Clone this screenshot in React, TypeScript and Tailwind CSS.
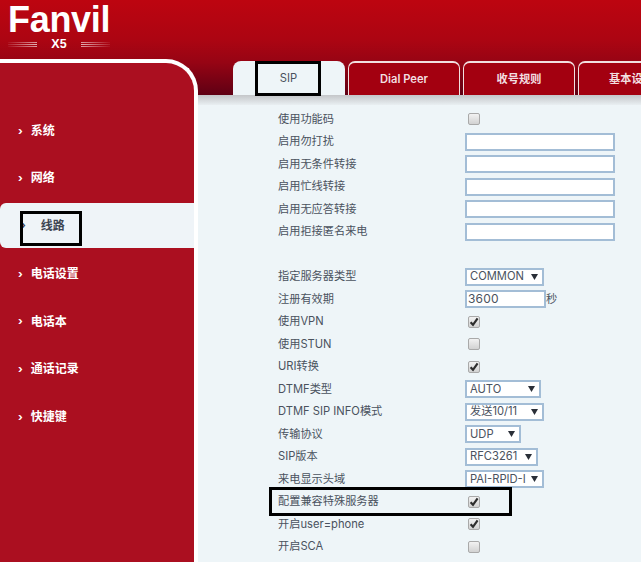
import React from "react";

const cjk = { fontFamily: 'Inter, "Noto Sans CJK SC", sans-serif' };

function Check({ on }: { on?: boolean }) {
  return (
    <span className="ml-[3px] flex h-[12px] w-[12px] items-center justify-center rounded-[2px] border border-[#a9a9a9] bg-gradient-to-b from-[#f2f2f2] to-[#d2d2d2]">
      {on && (
        <svg width="10" height="10" viewBox="0 0 10 10">
          <path d="M1.6 5.2 L4 7.8 L8.6 1.4" fill="none" stroke="#2e2e2e" strokeWidth="2.2" />
        </svg>
      )}
    </span>
  );
}

function TextBox({ w = "w-[150px]", value = "" }: { w?: string; value?: string }) {
  return (
    <div className={`${w} flex h-[18px] items-center border-2 border-[#a3bdd6] bg-white px-[1px] text-[12px] tracking-[0.2px] text-[#4a525e]`}>
      {value}
    </div>
  );
}

function Sel({ w, value }: { w: string; value: string }) {
  return (
    <div className={`${w} flex h-[18px] items-center justify-between overflow-hidden border-2 border-[#a3bdd6] bg-white pl-[3px] pr-[4px] text-[11.2px] text-[#4a525e]`}>
      <span className="overflow-hidden whitespace-nowrap">{value}</span>
      <svg width="7" height="6" viewBox="0 0 7 6" className="ml-[3px] shrink-0">
        <path d="M0 0 H7 L3.5 6 Z" fill="#2a2f38" />
      </svg>
    </div>
  );
}

function Row({ label, children }: { label?: string; children?: React.ReactNode }) {
  return (
    <div className="flex h-[22.5px] items-center">
      <div className="w-[187px] whitespace-nowrap text-[11.2px] text-[#4a525e]">{label}</div>
      {children}
    </div>
  );
}

const nav = ["系统", "网络", "线路", "电话设置", "电话本", "通话记录", "快捷键"];

function Tab({ label, w }: { label: string; w: string }) {
  return (
    <div className={`${w} flex h-full shrink-0 items-center justify-center rounded-t-[7px] border-x border-t-2 border-[#f2dfe0] bg-[#a30010] text-[11.2px] font-semibold text-[#f3dfe0]`}>
      {label}
    </div>
  );
}

function Lines({ flip }: { flip?: boolean }) {
  const dir = flip ? "bg-gradient-to-r" : "bg-gradient-to-l";
  return (
    <div className="flex w-[29px] flex-col gap-[1px]">
      <span className={`h-[1px] ${dir} from-white/60 to-white/5`} />
      <span className={`h-[1px] ${dir} from-white/70 to-white/10`} />
      <span className={`h-[1px] ${dir} from-white/60 to-white/5`} />
    </div>
  );
}

export default function App() {
  return (
    <div className="relative h-[562px] w-[641px] overflow-hidden bg-[#eef5f8]" style={cjk}>
      <header className="relative h-[95px] bg-[linear-gradient(180deg,#bd0510_0%,#ac0512_42%,#960414_66%,#5f0014_100%)]">
        <div className="flex h-[61px] flex-col pl-[8px] pt-[2px]">
          <div
            className="h-[35px] text-[36px] font-bold leading-[36px] tracking-[-0.3px] text-white"
            style={{ fontFamily: '"Liberation Sans", sans-serif' }}
          >
            Fanvil
          </div>
          <div className="flex h-[14px] w-[102px] items-center justify-between">
            <Lines />
            <span className="text-[12.5px] font-bold leading-[14px] text-white" style={{ fontFamily: '"Liberation Sans", sans-serif' }}>
              X5
            </span>
            <Lines flip />
          </div>
        </div>
        <div className="ml-[233px] flex h-[34px] gap-[3px]">
          <div className="flex h-full w-[112px] shrink-0 items-center justify-center rounded-t-[8px] bg-[#eef5f8] pr-[1px] text-[11.2px] text-[#4a525e]">
            SIP
          </div>
          <Tab label="Dial Peer" w="w-[112px]" />
          <Tab label="收号规则" w="w-[112px]" />
          <div className="flex h-full w-[112px] shrink-0 items-center justify-start rounded-t-[7px] border-x border-t-2 border-[#f2dfe0] bg-[#a30010] pl-[30px] text-[11.2px] font-semibold whitespace-nowrap text-[#f3dfe0]">
            基本设置
          </div>
        </div>
      </header>

      <div className="flex">
        <aside className="z-10 -mt-[36px] h-[503px] w-[198px] shrink-0 rounded-tr-[32px] border-t-[4px] border-r-[4px] border-white bg-[#ab0f20] pt-[44px]">
          {nav.map((n) =>
            n === "线路" ? (
              <div key={n} className="mt-[1px] mb-[2px] flex h-[45px] w-[194px] items-center rounded-l-[6px] bg-[#eff4f8] pl-[21px] text-[12px] font-bold text-[#3d4552]">
                <span className="mr-[15px] text-[11px]">›</span>
                {n}
              </div>
            ) : (
              <div key={n} className="flex h-[47.6px] items-center pl-[18px] text-[12px] font-bold text-white">
                <span className="mr-[8px] text-[11px]">›</span>
                {n}
              </div>
            )
          )}
        </aside>

        <main className="flex-1">
          <div className="h-[10px] bg-gradient-to-b from-[#c4c6c9] to-[#e9eff2]" />
          <div className="pl-[80px] pt-[3px]">
            <Row label="使用功能码"><Check /></Row>
            <Row label="启用勿打扰"><TextBox /></Row>
            <Row label="启用无条件转接"><TextBox /></Row>
            <Row label="启用忙线转接"><TextBox /></Row>
            <Row label="启用无应答转接"><TextBox /></Row>
            <Row label="启用拒接匿名来电"><TextBox /></Row>
            <Row />
            <Row label="指定服务器类型"><Sel w="w-[79px]" value="COMMON" /></Row>
            <Row label="注册有效期">
              <TextBox w="w-[81px]" value="3600" />
              <span className="text-[11.2px] text-[#4a525e]">秒</span>
            </Row>
            <Row label="使用VPN"><Check on /></Row>
            <Row label="使用STUN"><Check /></Row>
            <Row label="URI转换"><Check on /></Row>
            <Row label="DTMF类型"><Sel w="w-[76px]" value="AUTO" /></Row>
            <Row label="DTMF SIP INFO模式"><Sel w="w-[79px]" value="发送10/11" /></Row>
            <Row label="传输协议"><Sel w="w-[56px]" value="UDP" /></Row>
            <Row label="SIP版本"><Sel w="w-[73px]" value="RFC3261" /></Row>
            <Row label="来电显示头域"><Sel w="w-[79px]" value="PAI-RPID-I" /></Row>
            <Row label="配置兼容特殊服务器"><Check on /></Row>
            <Row label="开启user=phone"><Check on /></Row>
            <Row label="开启SCA"><Check /></Row>
          </div>
        </main>
      </div>

      <div className="absolute left-[255px] top-[61px] z-20 h-[35px] w-[66px] border-[3px] border-black" />
      <div className="absolute left-[20px] top-[211px] z-20 h-[35px] w-[62px] border-[3px] border-black" />
      <div className="absolute left-[269px] top-[487px] z-20 h-[29px] w-[243px] border-[3px] border-black" />
    </div>
  );
}
